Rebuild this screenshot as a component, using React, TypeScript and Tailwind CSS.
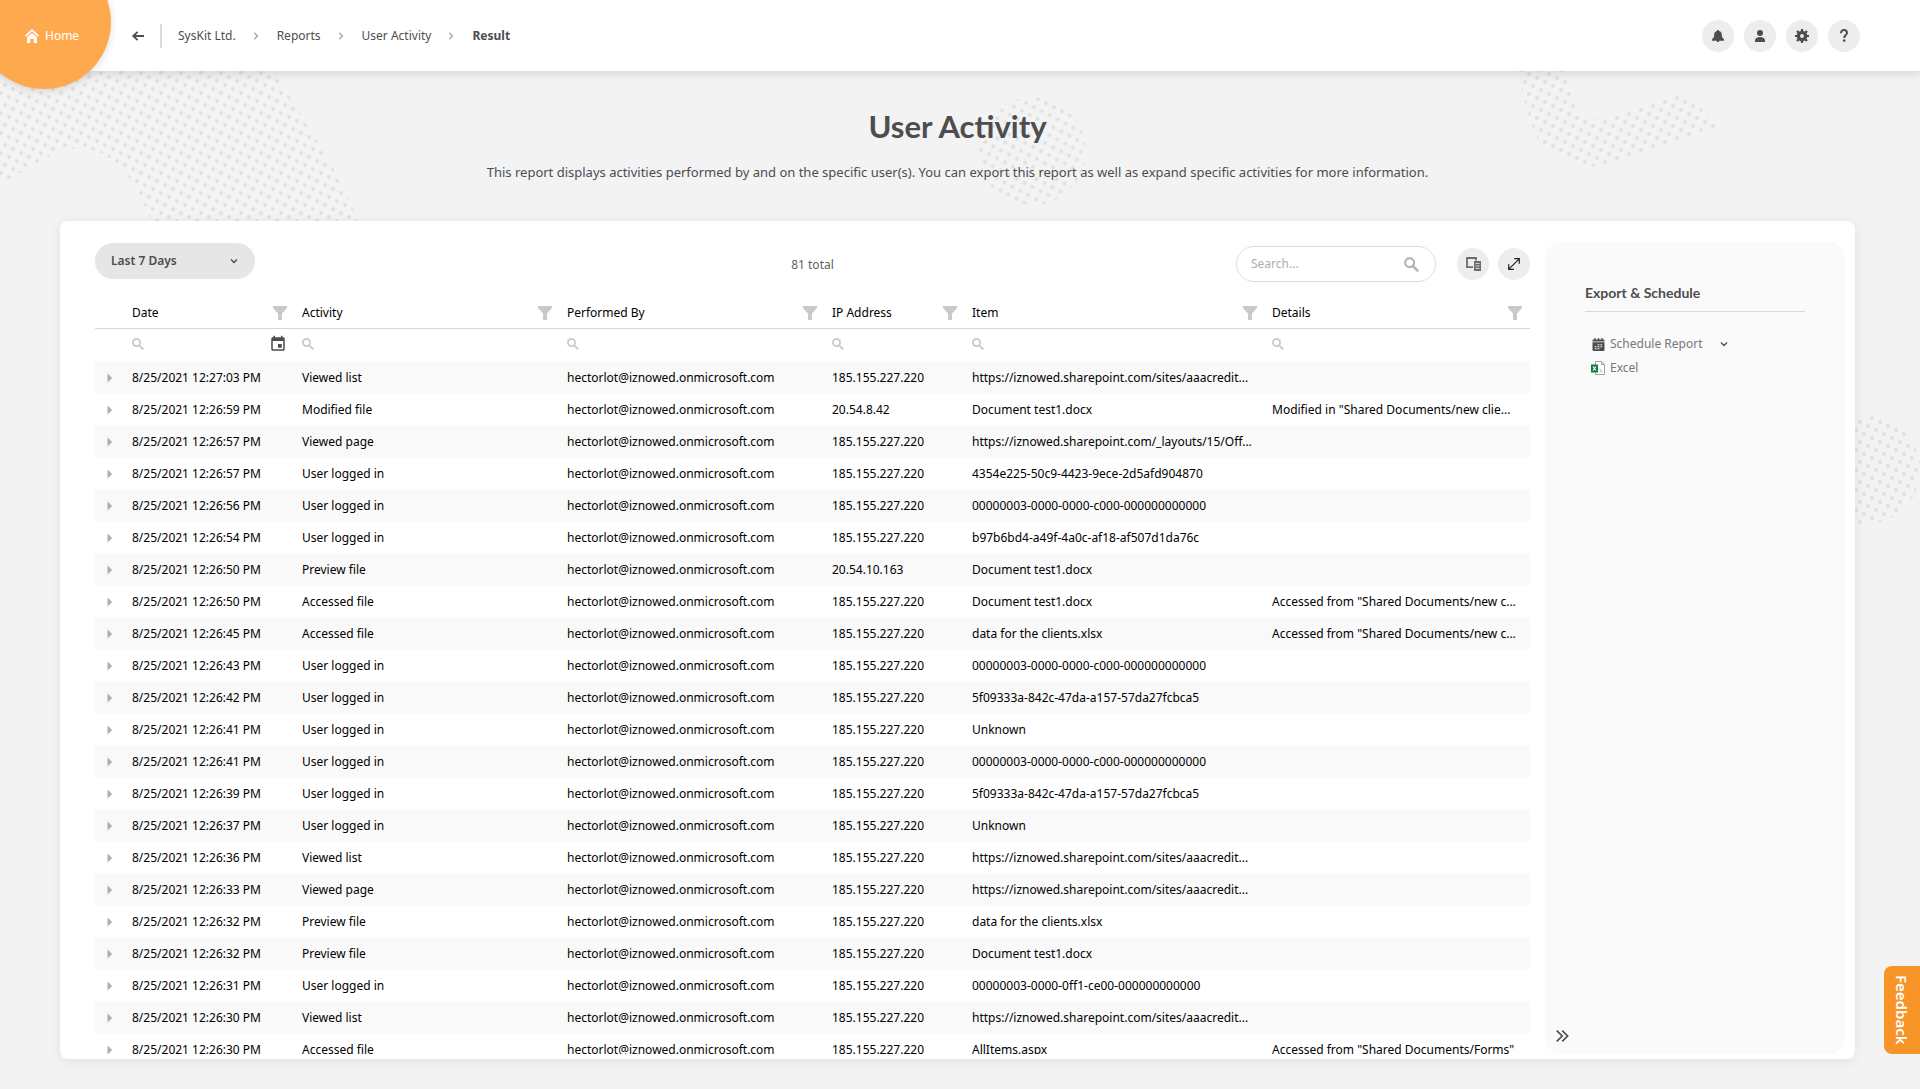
import type { ReactNode } from "react";
import { MdEvent } from "react-icons/md";

type Row = [string, string, string, string, string];

const A = "185.155.227.220";
const SITE = "https://iznowed.sharepoint.com/sites/aaacredit...";
const ROWS: Row[] = [
  ["12:27:03", "Viewed list", A, SITE, ""],
  ["12:26:59", "Modified file", "20.54.8.42", "Document test1.docx", 'Modified in "Shared Documents/new clie...'],
  ["12:26:57", "Viewed page", A, "https://iznowed.sharepoint.com/_layouts/15/Off...", ""],
  ["12:26:57", "User logged in", A, "4354e225-50c9-4423-9ece-2d5afd904870", ""],
  ["12:26:56", "User logged in", A, "00000003-0000-0000-c000-000000000000", ""],
  ["12:26:54", "User logged in", A, "b97b6bd4-a49f-4a0c-af18-af507d1da76c", ""],
  ["12:26:50", "Preview file", "20.54.10.163", "Document test1.docx", ""],
  ["12:26:50", "Accessed file", A, "Document test1.docx", 'Accessed from "Shared Documents/new c...'],
  ["12:26:45", "Accessed file", A, "data for the clients.xlsx", 'Accessed from "Shared Documents/new c...'],
  ["12:26:43", "User logged in", A, "00000003-0000-0000-c000-000000000000", ""],
  ["12:26:42", "User logged in", A, "5f09333a-842c-47da-a157-57da27fcbca5", ""],
  ["12:26:41", "User logged in", A, "Unknown", ""],
  ["12:26:41", "User logged in", A, "00000003-0000-0000-c000-000000000000", ""],
  ["12:26:39", "User logged in", A, "5f09333a-842c-47da-a157-57da27fcbca5", ""],
  ["12:26:37", "User logged in", A, "Unknown", ""],
  ["12:26:36", "Viewed list", A, SITE, ""],
  ["12:26:33", "Viewed page", A, SITE, ""],
  ["12:26:32", "Preview file", A, "data for the clients.xlsx", ""],
  ["12:26:32", "Preview file", A, "Document test1.docx", ""],
  ["12:26:31", "User logged in", A, "00000003-0000-0ff1-ce00-000000000000", ""],
  ["12:26:30", "Viewed list", A, SITE, ""],
  ["12:26:30", "Accessed file", A, "AllItems.aspx", 'Accessed from "Shared Documents/Forms"'],
];

const COLUMNS = ["Date", "Activity", "Performed By", "IP Address", "Item", "Details"];

function DotPattern({ id, x, y, angle = 0 }: { id: string; x: number; y: number; angle?: number }) {
  return (
    <pattern id={id} width="20" height="20" patternUnits="userSpaceOnUse" patternTransform={`translate(${x - 2} ${y - 2}) rotate(${angle})`}>
      <g fill="#e1e1e1">
        <circle cx="2" cy="2" r="2" />
        <circle cx="10" cy="6" r="2" />
        <circle cx="18" cy="10" r="2" />
        <circle cx="6" cy="14" r="2" />
        <circle cx="14" cy="18" r="2" />
      </g>
    </pattern>
  );
}

function Backdrop() {
  return (
    <div aria-hidden="true" className="pointer-events-none absolute inset-0 overflow-hidden">
      <svg className="absolute left-0 top-0" width="370" height="150" viewBox="0 71 370 150">
        <DotPattern id="dots-a" x={141} y={73} />
        <path
          fill="url(#dots-a)"
          d="M0 60H266C276 76 288 94 300 113C318 142 346 184 360 226H154C146 208 138 188 126 174C112 154 92 146 66 149C42 158 26 172 0 184Z"
        />
      </svg>
      <svg className="absolute right-0 top-0" width="420" height="110" viewBox="1500 71 420 110">
        <DotPattern id="dots-b" x={1529} y={74} />
        <path
          fill="url(#dots-b)"
          d="M1516 60L1523 96C1528 112 1532 130 1540 142C1550 152 1562 158 1578 162C1590 168 1600 168 1612 162L1716 127C1710 112 1694 100 1680 96C1664 96 1640 106 1620 113C1606 120 1592 122 1580 114C1572 104 1570 88 1561 66V60Z"
        />
      </svg>
      <svg className="absolute left-1/2 top-[24px] ml-[15px]" width="114" height="114" viewBox="975 95 114 114">
        <DotPattern id="dots-c" x={1038} y={99} angle={1} />
        <circle cx="1032" cy="151" r="54" fill="url(#dots-c)" />
      </svg>
      <svg className="absolute right-0 top-[339px]" width="110" height="120" viewBox="1810 410 110 120">
        <DotPattern id="dots-d" x={1872} y={418} />
        <circle cx="1866" cy="470" r="54" fill="url(#dots-d)" />
      </svg>
    </div>
  );
}

function Funnel() {
  return (
    <svg width="14" height="14" viewBox="0 0 14 14" className="fill-[#c9c9c9]">
      <path d="M0 0H14V2L9 7.5V14H5V7.5L0 2Z" />
    </svg>
  );
}

function Lens({ size = 12 }: { size?: number }) {
  return (
    <svg width={size} height={size} viewBox="0 0 12 12" fill="none" stroke="currentColor">
      <circle cx="4.5" cy="4.5" r="3.6" strokeWidth="1.7" />
      <path d="M7.2 7.4L11.3 11.4" strokeWidth="2" />
    </svg>
  );
}

function ChevronDown() {
  return (
    <svg width="8" height="8" viewBox="0 0 8 8" fill="none" stroke="currentColor" strokeWidth="1.4">
      <path d="M1 2.4L4 5.4L7 2.4" />
    </svg>
  );
}

function Crumb({ children }: { children: ReactNode }) {
  return (
    <li className="flex items-center">
      <a href="#" className="whitespace-nowrap">{children}</a>
      <svg width="6" height="8" viewBox="0 0 6 8" fill="none" stroke="#a9a9a9" strokeWidth="1.4" className="ml-[17px] mr-[18px]">
        <path d="M1.3 0.8L4.5 4L1.3 7.2" />
      </svg>
    </li>
  );
}

function RoundButton({ label, children }: { label: string; children: ReactNode }) {
  return (
    <button type="button" aria-label={label} className="flex size-8 items-center justify-center rounded-full bg-[#ededed] text-[#4d4d4f]">
      {children}
    </button>
  );
}

function Header() {
  return (
    <header className="relative z-10 flex h-[71px] shrink-0 items-center bg-white pb-[13px] pl-[131px] pr-[60px] pt-px shadow-[0_2px_10px_rgba(0,0,0,0.14)]">
      <a
        href="#"
        className="absolute left-[-23px] top-[-45px] flex size-[134px] items-center gap-[6px] rounded-full bg-[#ffa94f] pl-12 pt-7 text-xs leading-4 text-white shadow-[0_2px_8px_rgba(0,0,0,0.12)]"
      >
        <svg width="14" height="14" viewBox="0 0 14 14" className="shrink-0">
          <path d="M0.6 7.2L7 1.2L13.4 7.2" fill="none" stroke="white" strokeWidth="1.7" />
          <path d="M2 8.6L7 4L12 8.6V14H8.6V10H5.4V14H2Z" fill="white" />
        </svg>
        Home
      </a>
      <button type="button" aria-label="Back" className="mt-3 text-[#4d4d4f]">
        <svg width="14" height="12" viewBox="0 0 14 12" fill="none" stroke="currentColor" strokeWidth="1.8">
          <path d="M2.4 6H13M6.6 1.8L2.2 6L6.6 10.2" />
        </svg>
      </button>
      <div className="ml-[15px] mt-3 h-6 w-[2px] bg-[#dadada]" />
      <nav aria-label="Breadcrumb" className="ml-4 mt-3">
        <ol className="flex items-center text-xs text-[#4d4d4f]">
          <Crumb>SysKit Ltd.</Crumb>
          <Crumb>Reports</Crumb>
          <Crumb>User Activity</Crumb>
          <li className="font-bold" aria-current="page">Result</li>
        </ol>
      </nav>
      <div className="ml-auto mt-3 flex gap-[10px]">
        <RoundButton label="Notifications">
          <svg width="12" height="12" viewBox="0 0 12 12" fill="currentColor">
            <path d="M6 0C6.7 0 7 0.4 7 0.9C9 1.3 9.8 2.8 9.8 4.6C9.8 7 10.4 8.2 12 9.2V10.8H7.4C7.3 11.6 6.8 12 6 12C5.2 12 4.7 11.6 4.6 10.8H0V9.2C1.6 8.2 2.2 7 2.2 4.6C2.2 2.8 3 1.3 5 0.9C5 0.4 5.3 0 6 0Z" />
          </svg>
        </RoundButton>
        <RoundButton label="Account">
          <svg width="10" height="12" viewBox="0 0 10 12" fill="currentColor">
            <circle cx="5" cy="3" r="3" />
            <path d="M0 12V10.6C0 8.4 2 7 5 7S10 8.4 10 10.6V12Z" />
          </svg>
        </RoundButton>
        <RoundButton label="Settings">
          <svg width="14" height="14" viewBox="-7 -7 14 14" fill="none" stroke="currentColor">
            <circle r="3.6" strokeWidth="3.4" />
            <path strokeWidth="2.2" d="M0-7V-4.5M0 7V4.5M-7 0H-4.5M7 0H4.5M-5-5L-3.4-3.4M5 5L3.4 3.4M-5 5L-3.4 3.4M5-5L3.4-3.4" />
          </svg>
        </RoundButton>
        <RoundButton label="Help">
          <svg width="8" height="13" viewBox="0 0 8 13" fill="none" stroke="currentColor" strokeWidth="2">
            <path d="M1 4.2C1 2.2 2.2 1 4 1S7 2.1 7 3.8C7 6 4.2 6.2 4.2 9" />
            <circle cx="4.2" cy="11.6" r="1.3" fill="currentColor" stroke="none" />
          </svg>
        </RoundButton>
      </div>
    </header>
  );
}

function Toolbar() {
  return (
    <div className="grid h-[76px] shrink-0 grid-cols-3 items-start pt-[22px]">
      <div className="relative w-40 text-[#4d4d4f]">
        <select aria-label="Time range" className="h-9 w-full appearance-none rounded-full bg-[#e6e6e6] pl-4 text-xs font-semibold outline-none">
          <option>Last 7 Days</option>
        </select>
        <span className="pointer-events-none absolute right-[17px] top-[14px]">
          <ChevronDown />
        </span>
      </div>
      <p className="mt-[14px] text-center text-xs leading-4 text-[#5f5f61]">81 total</p>
      <div className="mt-[3px] flex items-center justify-end">
        <label className="flex h-9 w-[200px] items-center rounded-full border border-[#dcdcdc] bg-white pl-[14px] pr-4 text-[#b5b5b5]">
          <input type="text" aria-label="Search" placeholder="Search..." className="min-w-0 flex-1 text-xs text-[#4d4d4f] outline-none placeholder:text-[#adadad]" />
          <Lens size={15} />
        </label>
        <button type="button" aria-label="Choose columns" className="ml-[21px] flex size-8 items-center justify-center rounded-full bg-[#ededed] text-[#6b6b6d]">
          <svg width="15" height="14" viewBox="0 0 15 14" fill="none" stroke="currentColor">
            <path d="M7 10.2H1V1H10V3.5" strokeWidth="1.8" />
            <path d="M8 4H15V14H8Z" fill="currentColor" stroke="none" />
            <path d="M9.5 6.5H13.5M9.5 9H13.5M9.5 11.5H13.5" stroke="#ededed" strokeWidth="0.8" />
          </svg>
        </button>
        <button type="button" aria-label="Full screen" className="ml-[9px] flex size-8 items-center justify-center rounded-full bg-[#ededed] text-[#222222]">
          <svg width="12" height="12" viewBox="0 0 12 12" fill="none" stroke="currentColor" strokeWidth="1.2">
            <path d="M0.8 11.2L11.2 0.8M6.2 0.7H11.3V5.8M0.7 6.2V11.3H5.8" />
          </svg>
        </button>
      </div>
    </div>
  );
}

function ActivityTable() {
  return (
    <div className="min-h-0 flex-1 overflow-y-auto [scrollbar-width:none]">
      <table className="w-full table-fixed border-collapse text-xs leading-4 text-black">
        <colgroup>
          <col className="w-[30px]" />
          <col className="w-[170px]" />
          <col className="w-[265px]" />
          <col className="w-[265px]" />
          <col className="w-[140px]" />
          <col className="w-[300px]" />
          <col />
        </colgroup>
        <thead>
          <tr className="h-[31px] border-b border-[#d8d8d8]">
            <td />
            {COLUMNS.map((name) => (
              <th key={name} scope="col" className="pb-0 pl-[7px] pr-2 pt-[2px] text-left font-normal">
                <div className="flex items-center justify-between">
                  {name}
                  <button type="button" aria-label={`Filter ${name}`}>
                    <Funnel />
                  </button>
                </div>
              </th>
            ))}
          </tr>
          <tr className="h-[34px]">
            <td />
            {COLUMNS.map((name) => (
              <td key={name} className="pb-[2px] pl-[7px] pr-2">
                <div className="flex items-center gap-2 text-[#c9c9c9]">
                  <Lens />
                  <input type="text" aria-label={`Search ${name}`} className="h-5 min-w-0 flex-1 text-black outline-none" />
                  {name === "Date" && (
                    <button type="button" aria-label="Pick a date" className="text-[#4d4d4f]">
                      <MdEvent size={18} />
                    </button>
                  )}
                </div>
              </td>
            ))}
          </tr>
        </thead>
        <tbody>
          {ROWS.map(([time, activity, ip, item, details], i) => (
            <tr key={i} className="h-8 whitespace-nowrap odd:bg-[#f9f9f9]">
              <td>
                <button type="button" aria-label="Expand row" className="ml-3 block">
                  <svg width="6" height="10" viewBox="0 0 6 10" className="fill-[#adadad]">
                    <path d="M0.5 0.5L5.2 5L0.5 9.5Z" />
                  </svg>
                </button>
              </td>
              <td className="pl-[7px]">8/25/2021 {time} PM</td>
              <td className="pl-[7px]">{activity}</td>
              <td className="pl-[7px]">hectorlot@iznowed.onmicrosoft.com</td>
              <td className="pl-[7px]">{ip}</td>
              <td className="pl-[7px]">{item}</td>
              <td className="pl-[7px]">{details}</td>
            </tr>
          ))}
        </tbody>
      </table>
    </div>
  );
}

function SidePanel() {
  return (
    <aside className="ml-[15px] mr-[10px] mt-[21px] flex w-[300px] shrink-0 flex-col rounded-2xl bg-[#fafafa] pt-[41px]">
      <h2 className="mx-10 border-b border-[#d8d8d8] pb-2 font-['Lato',sans-serif] text-sm font-bold text-[#4d4d4f]">
        Export &amp; Schedule
      </h2>
      <div className="ml-[47px] mt-5 flex flex-col items-start text-xs text-[#77777a]">
        <button type="button" className="flex h-6 items-center">
          <svg width="13" height="13" viewBox="0 0 13 13" className="mr-[5px]">
            <path d="M0.5 3.4V2Q0.5 1.4 1.1 1.4H11.9Q12.5 1.4 12.5 2V3.4ZM0.5 4.2H12.5V11.8Q12.5 13 11.3 13H1.7Q0.5 13 0.5 11.8Z" fill="#4d4d4f" />
            <path d="M3 0V2.4M6.5 0V2.4M10 0V2.4" stroke="#4d4d4f" strokeWidth="1.3" />
            <path d="M5.6 6.7H7.4M8.4 6.7H10.2M2.8 8.7H4.6M5.6 8.7H7.4M8.4 8.7H10.2M2.8 10.7H4.6M5.6 10.7H7.4" stroke="#fafafa" strokeWidth="1.1" />
          </svg>
          Schedule Report
          <span className="ml-[18px] text-[#4d4d4f]">
            <ChevronDown />
          </span>
        </button>
        <button type="button" className="-ml-px flex h-6 items-center">
          <svg width="14" height="14" viewBox="0 0 14 14" className="mr-[5px]">
            <path d="M4.5 0.5H10.5L13.5 3.5V13.5H4.5ZM10.5 0.5V3.5H13.5" fill="#fff" stroke="#a3a3a3" />
            <path d="M8.5 7.5L11.5 11.5M8.5 11H10" stroke="#8fcfa5" />
            <path d="M0 3.5H7V11.5H0Z" fill="#107c41" />
            <path d="M2 5.5L5 9.5M5 5.5L2 9.5" stroke="#fff" strokeWidth="1.1" />
          </svg>
          Excel
        </button>
      </div>
      <button type="button" aria-label="Collapse panel" className="mb-3 ml-[11px] mt-auto self-start text-[#4d4d4f]">
        <svg width="13" height="12" viewBox="0 0 13 12" fill="none" stroke="currentColor" strokeWidth="1.7">
          <path d="M0.8 0.6L6.2 6L0.8 11.4M6.2 0.6L11.6 6L6.2 11.4" />
        </svg>
      </button>
    </aside>
  );
}

export default function App() {
  return (
    <div className="flex h-screen flex-col bg-[#f3f3f3] font-['Noto_Sans',sans-serif]">
      <Header />
      <main className="relative flex min-h-0 flex-1 flex-col pb-[30px] pl-[60px] pr-[65px]">
        <Backdrop />
        <div className="relative h-[150px] shrink-0 pt-[35px] text-center text-[#4d4d4f]">
          <h1 className="font-['Lato',sans-serif] text-[31px] font-bold leading-10">User Activity</h1>
          <p className="mt-4 text-[13px] leading-5">
            This report displays activities performed by and on the specific user(s). You can export this report as well as expand specific activities for more information.
          </p>
        </div>
        <section className="relative flex min-h-0 flex-1 rounded-lg bg-white pb-[5px] pl-[35px] shadow-[0_2px_12px_rgba(0,0,0,0.08)]">
          <div className="flex min-w-0 flex-1 flex-col">
            <Toolbar />
            <ActivityTable />
          </div>
          <SidePanel />
        </section>
      </main>
      <button
        type="button"
        className="fixed bottom-[35px] right-0 z-20 flex h-[88px] w-9 items-center justify-center rounded-l-lg bg-[#f79427] text-[15px] font-semibold text-white [writing-mode:vertical-rl]"
      >
        Feedback
      </button>
    </div>
  );
}
